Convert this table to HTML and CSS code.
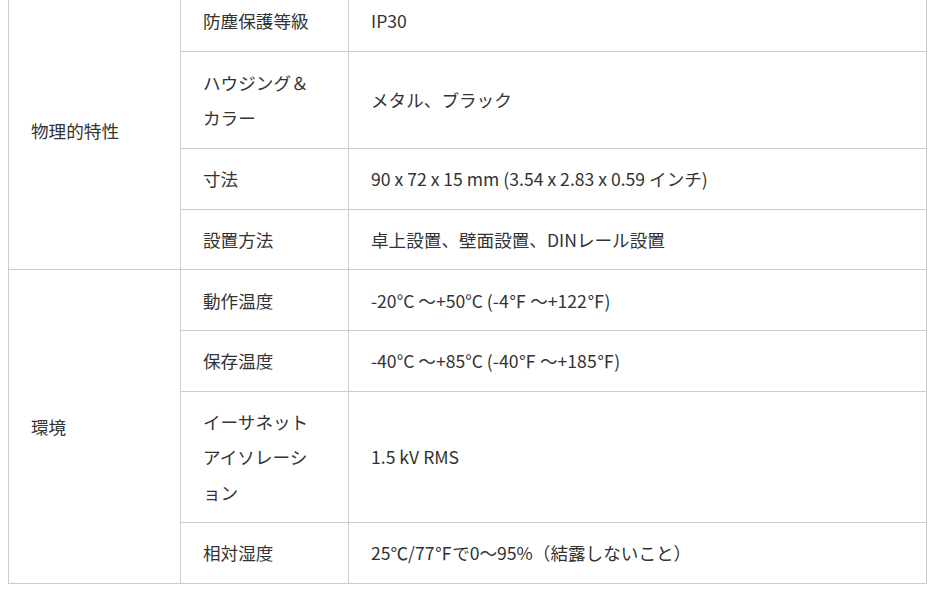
FILE: index.html
```html
<!DOCTYPE html>
<html lang="ja">
<head>
<meta charset="utf-8">
<title>仕様</title>
<link rel="stylesheet" href="styles.css">
</head>
<body>
<table class="spec">
  <colgroup>
    <col class="c-group">
    <col class="c-name">
    <col class="c-value">
  </colgroup>
  <tbody>
    <tr>
      <td class="group" rowspan="4">物理的特性</td>
      <td>防塵保護等級</td>
      <td>IP30</td>
    </tr>
    <tr>
      <td class="two">ハウジング＆<br>カラー</td>
      <td>メタル、ブラック</td>
    </tr>
    <tr>
      <td>寸法</td>
      <td>90 x 72 x 15 mm (3.54 x 2.83 x 0.59 インチ)</td>
    </tr>
    <tr>
      <td>設置方法</td>
      <td>卓上設置、壁面設置、DINレール設置</td>
    </tr>
    <tr>
      <td class="group" rowspan="4">環境</td>
      <td>動作温度</td>
      <td>-20°C ～+50°C (-4℉ ～+122℉)</td>
    </tr>
    <tr>
      <td>保存温度</td>
      <td>-40°C ～+85°C (-40℉ ～+185℉)</td>
    </tr>
    <tr>
      <td>イーサネット<br>アイソレーシ<br>ョン</td>
      <td>1.5 kV RMS</td>
    </tr>
    <tr>
      <td>相対湿度</td>
      <td>25℃/77℉で0～95%（結露しないこと）</td>
    </tr>
  </tbody>
</table>
</body>
</html>
```
FILE: styles.css
```css
html, body {
  background: #ffffff;
}
body {
  margin: 0 8px;
  font-family: "Noto Sans CJK JP", "Noto Sans", sans-serif;
  font-size: 17.6px;
  line-height: 2;
  color: #333333;
}
.spec {
  width: 100%;
  margin-top: -10px;
  border-collapse: collapse;
  table-layout: fixed;
  border: 1px solid #cccccc;
}
.c-group { width: 172px; }
.c-name { width: 168px; }
.spec td {
  border: 1px solid #cccccc;
  padding: 12.3px 22px;
  vertical-align: middle;
  text-align: left;
  font-weight: 400;
}
.spec td.two {
  padding-top: 12.8px;
  padding-bottom: 12.8px;
}
```
